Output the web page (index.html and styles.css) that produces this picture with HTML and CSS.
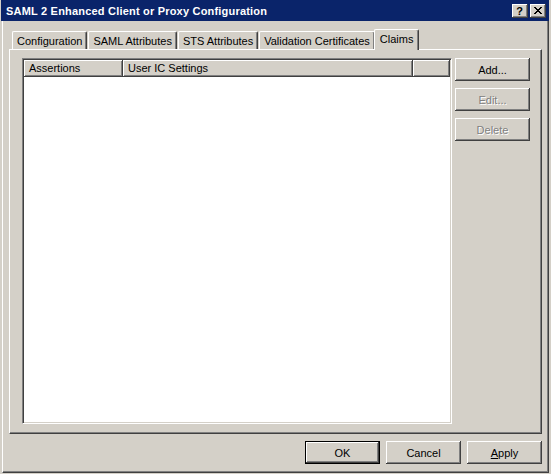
FILE: index.html
```html
<!DOCTYPE html>
<html>
<head>
<meta charset="utf-8">
<title>SAML 2 Enhanced Client or Proxy Configuration</title>
<link rel="stylesheet" href="styles.css">
</head>
<body>
<div class="window">
  <div class="titlebar">
    <span class="title">SAML 2 Enhanced Client or Proxy Configuration</span>
    <div class="caption-btns">
      <span class="cbtn help">?</span>
      <span class="cbtn close"><svg width="8" height="7" viewBox="0 0 8 7" shape-rendering="crispEdges"><path d="M0 0h2v1H0zM6 0h2v1H6zM1 1h2v1H1zM5 1h2v1H5zM2 2h4v1H2zM3 3h2v1H3zM2 4h4v1H2zM1 5h2v1H1zM5 5h2v1H5zM0 6h2v1H0zM6 6h2v1H6z" fill="#000"/></svg></span>
    </div>
  </div>
  <div class="frame">
    <div class="tabs">
      <div class="tab">Configuration</div>
      <div class="tab">SAML Attributes</div>
      <div class="tab">STS Attributes</div>
      <div class="tab">Validation Certificates</div>
      <div class="tab active">Claims</div>
    </div>
    <div class="panel">
      <div class="listview">
        <div class="header">
          <div class="col c1">Assertions</div>
          <div class="col c2">User IC Settings</div>
          <div class="col c3"></div>
        </div>
        <div class="list-body"></div>
      </div>
      <div class="side-btns">
        <button class="btn">Add...</button>
        <button class="btn" disabled>Edit...</button>
        <button class="btn" disabled>Delete</button>
      </div>
    </div>
    <div class="footer">
      <button class="btn default">OK</button>
      <button class="btn">Cancel</button>
      <button class="btn"><u>A</u>pply</button>
    </div>
  </div>
</div>
</body>
</html>
```
FILE: styles.css
```css
* { box-sizing: border-box; }
html, body { margin: 0; padding: 0; background: #d4d0c8; }
body {
  font-family: "Liberation Sans", Arial, sans-serif;
  font-size: 11px;
  color: #000;
}
.window {
  width: 551px;
  height: 474px;
  background: #d4d0c8;
  display: flex;
  flex-direction: column;
  overflow: hidden;
}
.titlebar {
  height: 21px;
  margin: 0 2px 0 1px;
  background: #0a246a;
  display: flex;
  justify-content: space-between;
  padding: 0 3px 0 5px;
  flex: none;
}
.title {
  color: #fff;
  font-weight: bold;
  font-size: 11px;
  letter-spacing: 0.2px;
  line-height: 13px;
  padding-top: 5px;
  white-space: nowrap;
}
.caption-btns {
  display: flex;
  gap: 2px;
  margin-top: 4px;
}
.cbtn {
  width: 16px;
  height: 14px;
  background: #d4d0c8;
  box-shadow: inset -1px -1px #404040, inset 1px 1px #fff, inset -2px -2px #808080;
  display: flex;
  align-items: center;
  justify-content: center;
}
.help {
  font-weight: bold;
  font-size: 11px;
  line-height: 11px;
  padding: 1px 1px 0 0;
}
.close svg { display: block; margin: 0 1px 1px 0; }
.frame {
  flex: 1;
  margin: 0 2px 1px 2px;
  border-left: 1px solid #fff;
  border-right: 1px solid #404040;
  border-bottom: 1px solid #404040;
  box-shadow: inset -1px -1px #808080;
  display: flex;
  flex-direction: column;
  padding: 8px 6px 0 6px;
}
.tabs {
  display: flex;
  align-items: flex-end;
  gap: 1px;
  height: 20px;
  padding-left: 3px;
  position: relative;
  z-index: 1;
  flex: none;
}
.tab {
  height: 18px;
  padding: 3px 4px 0;
  border-top: 1px solid #fff;
  border-left: 1px solid #fff;
  border-right: 1px solid #404040;
  box-shadow: inset -1px 0 #808080;
  border-radius: 2px 2px 0 0;
  line-height: 13px;
  white-space: nowrap;
  background: #d4d0c8;
}
.tab.active {
  height: 21px;
  margin: 0 -2px -1px;
  padding: 3px 5px 0;
  position: relative;
  z-index: 2;
}
.panel {
  flex: none;
  height: 385px;
  border-top: 1px solid #fff;
  border-left: 1px solid #fff;
  border-right: 1px solid #404040;
  border-bottom: 1px solid #404040;
  box-shadow: inset -1px -1px #808080;
  display: flex;
  padding: 8px 11px 9px 12px;
  gap: 3px;
}
.listview {
  width: 430px;
  background: #fff;
  border-top: 1px solid #808080;
  border-left: 1px solid #808080;
  border-right: 1px solid #fff;
  border-bottom: 1px solid #fff;
  box-shadow: inset 1px 1px #404040, inset -1px -1px #d4d0c8;
  padding: 1px;
  display: flex;
  flex-direction: column;
}
.header {
  display: flex;
  height: 17px;
  flex: none;
}
.col {
  background: #d4d0c8;
  box-shadow: inset -1px -1px #404040, inset 1px 1px #fff, inset -2px -2px #808080;
  padding: 0 5px;
  line-height: 17px;
  white-space: nowrap;
}
.c1 { width: 99px; }
.c2 { width: 290px; }
.c3 { flex: 1; }
.list-body { flex: 1; background: #fff; }
.side-btns {
  display: flex;
  flex-direction: column;
  gap: 7px;
}
.btn {
  width: 75px;
  height: 23px;
  font: inherit;
  color: #000;
  background: #d4d0c8;
  border: none;
  padding: 0;
  margin: 0;
  box-shadow: inset -1px -1px #404040, inset 1px 1px #fff, inset -2px -2px #808080;
}
.btn:disabled {
  color: #808080;
  text-shadow: 1px 1px 0 #fff;
}
.btn.default {
  box-shadow: inset 0 0 0 1px #000, inset -2px -2px #404040, inset 2px 2px #fff, inset -3px -3px #808080;
}
.footer {
  display: flex;
  justify-content: flex-end;
  gap: 6px;
  padding-top: 7px;
  flex: none;
}
```
